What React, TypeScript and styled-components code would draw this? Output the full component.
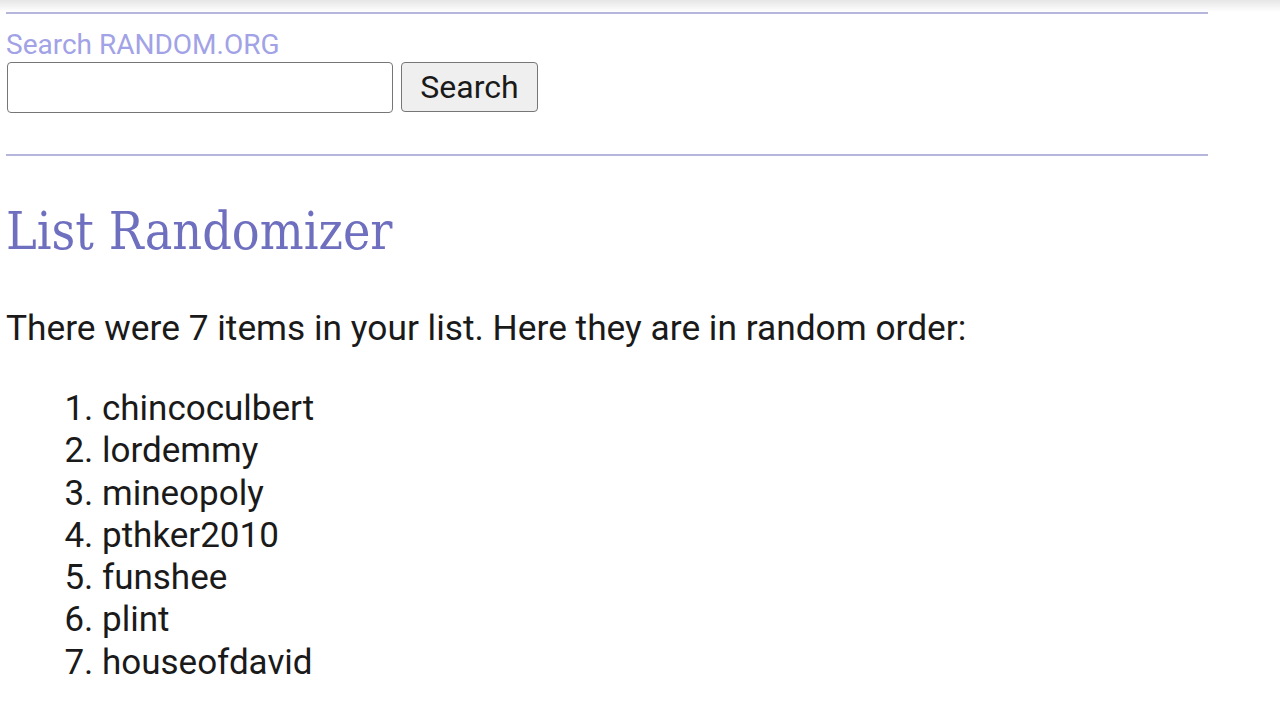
import React from "react";
import styled, { createGlobalStyle } from "styled-components";

const Global = createGlobalStyle`
  html, body { margin: 0; padding: 0; background: #fff; }
  body { font-family: Roboto, "Noto Sans", Arial, sans-serif; color: #1a1a1a; }
`;

const TopShade = styled.div`
  height: 12px;
  background: linear-gradient(#e6e6e6, #fff);
`;

const Page = styled.div`
  width: 1202px;
  padding: 0 6px;
`;

const Rule = styled.hr`
  border: 0;
  height: 2px;
  background: #b6b6dc;
  margin: 0;
`;

const SearchLabel = styled.div`
  font-size: 28px;
  line-height: 35px;
  color: #a2a2e6;
  margin-top: 13px;
`;

const SearchRow = styled.form`
  display: flex;
  gap: 8px;
  margin-top: 0px;
  margin-bottom: 41px;
`;

const SearchInput = styled.input`
  box-sizing: border-box;
  width: 386px;
  height: 51px;
  margin-left: 1px;
  border: 1.5px solid #767676;
  border-radius: 4px;
  background: #fff;
`;

const SearchButton = styled.button`
  box-sizing: border-box;
  width: 137px;
  height: 50px;
  border: 1.5px solid #767676;
  border-radius: 4px;
  background: #efefef;
  font-family: Roboto, sans-serif;
  font-size: 32px;
  color: #1a1a1a;
  padding: 0;
`;

const Title = styled.h1`
  font-family: "DejaVu Serif Condensed", "DejaVu Serif", "Liberation Serif", serif;
  font-stretch: condensed;
  font-weight: normal;
  font-size: 51.5px;
  line-height: 60px;
  color: #6f6fbf;
  margin: 45px 0 0 0;
`;

const Intro = styled.p`
  font-size: 35.3px;
  line-height: 42px;
  margin: 46px 0 0 0;
`;

const Items = styled.ol`
  margin: 39px 0 0 0;
  padding-left: 96px;
  font-size: 35px;
  line-height: 42.3px;
`;

const items = [
  "chincoculbert",
  "lordemmy",
  "mineopoly",
  "pthker2010",
  "funshee",
  "plint",
  "houseofdavid",
];

export default function App() {
  return (
    <>
      <Global />
      <TopShade />
      <Page>
        <Rule />
        <SearchLabel>Search RANDOM.ORG</SearchLabel>
        <SearchRow onSubmit={(e) => e.preventDefault()}>
          <SearchInput type="text" />
          <SearchButton type="submit">Search</SearchButton>
        </SearchRow>
        <Rule />
        <Title>List Randomizer</Title>
        <Intro>There were 7 items in your list. Here they are in random order:</Intro>
        <Items>
          {items.map((it) => (
            <li key={it}>{it}</li>
          ))}
        </Items>
      </Page>
    </>
  );
}
